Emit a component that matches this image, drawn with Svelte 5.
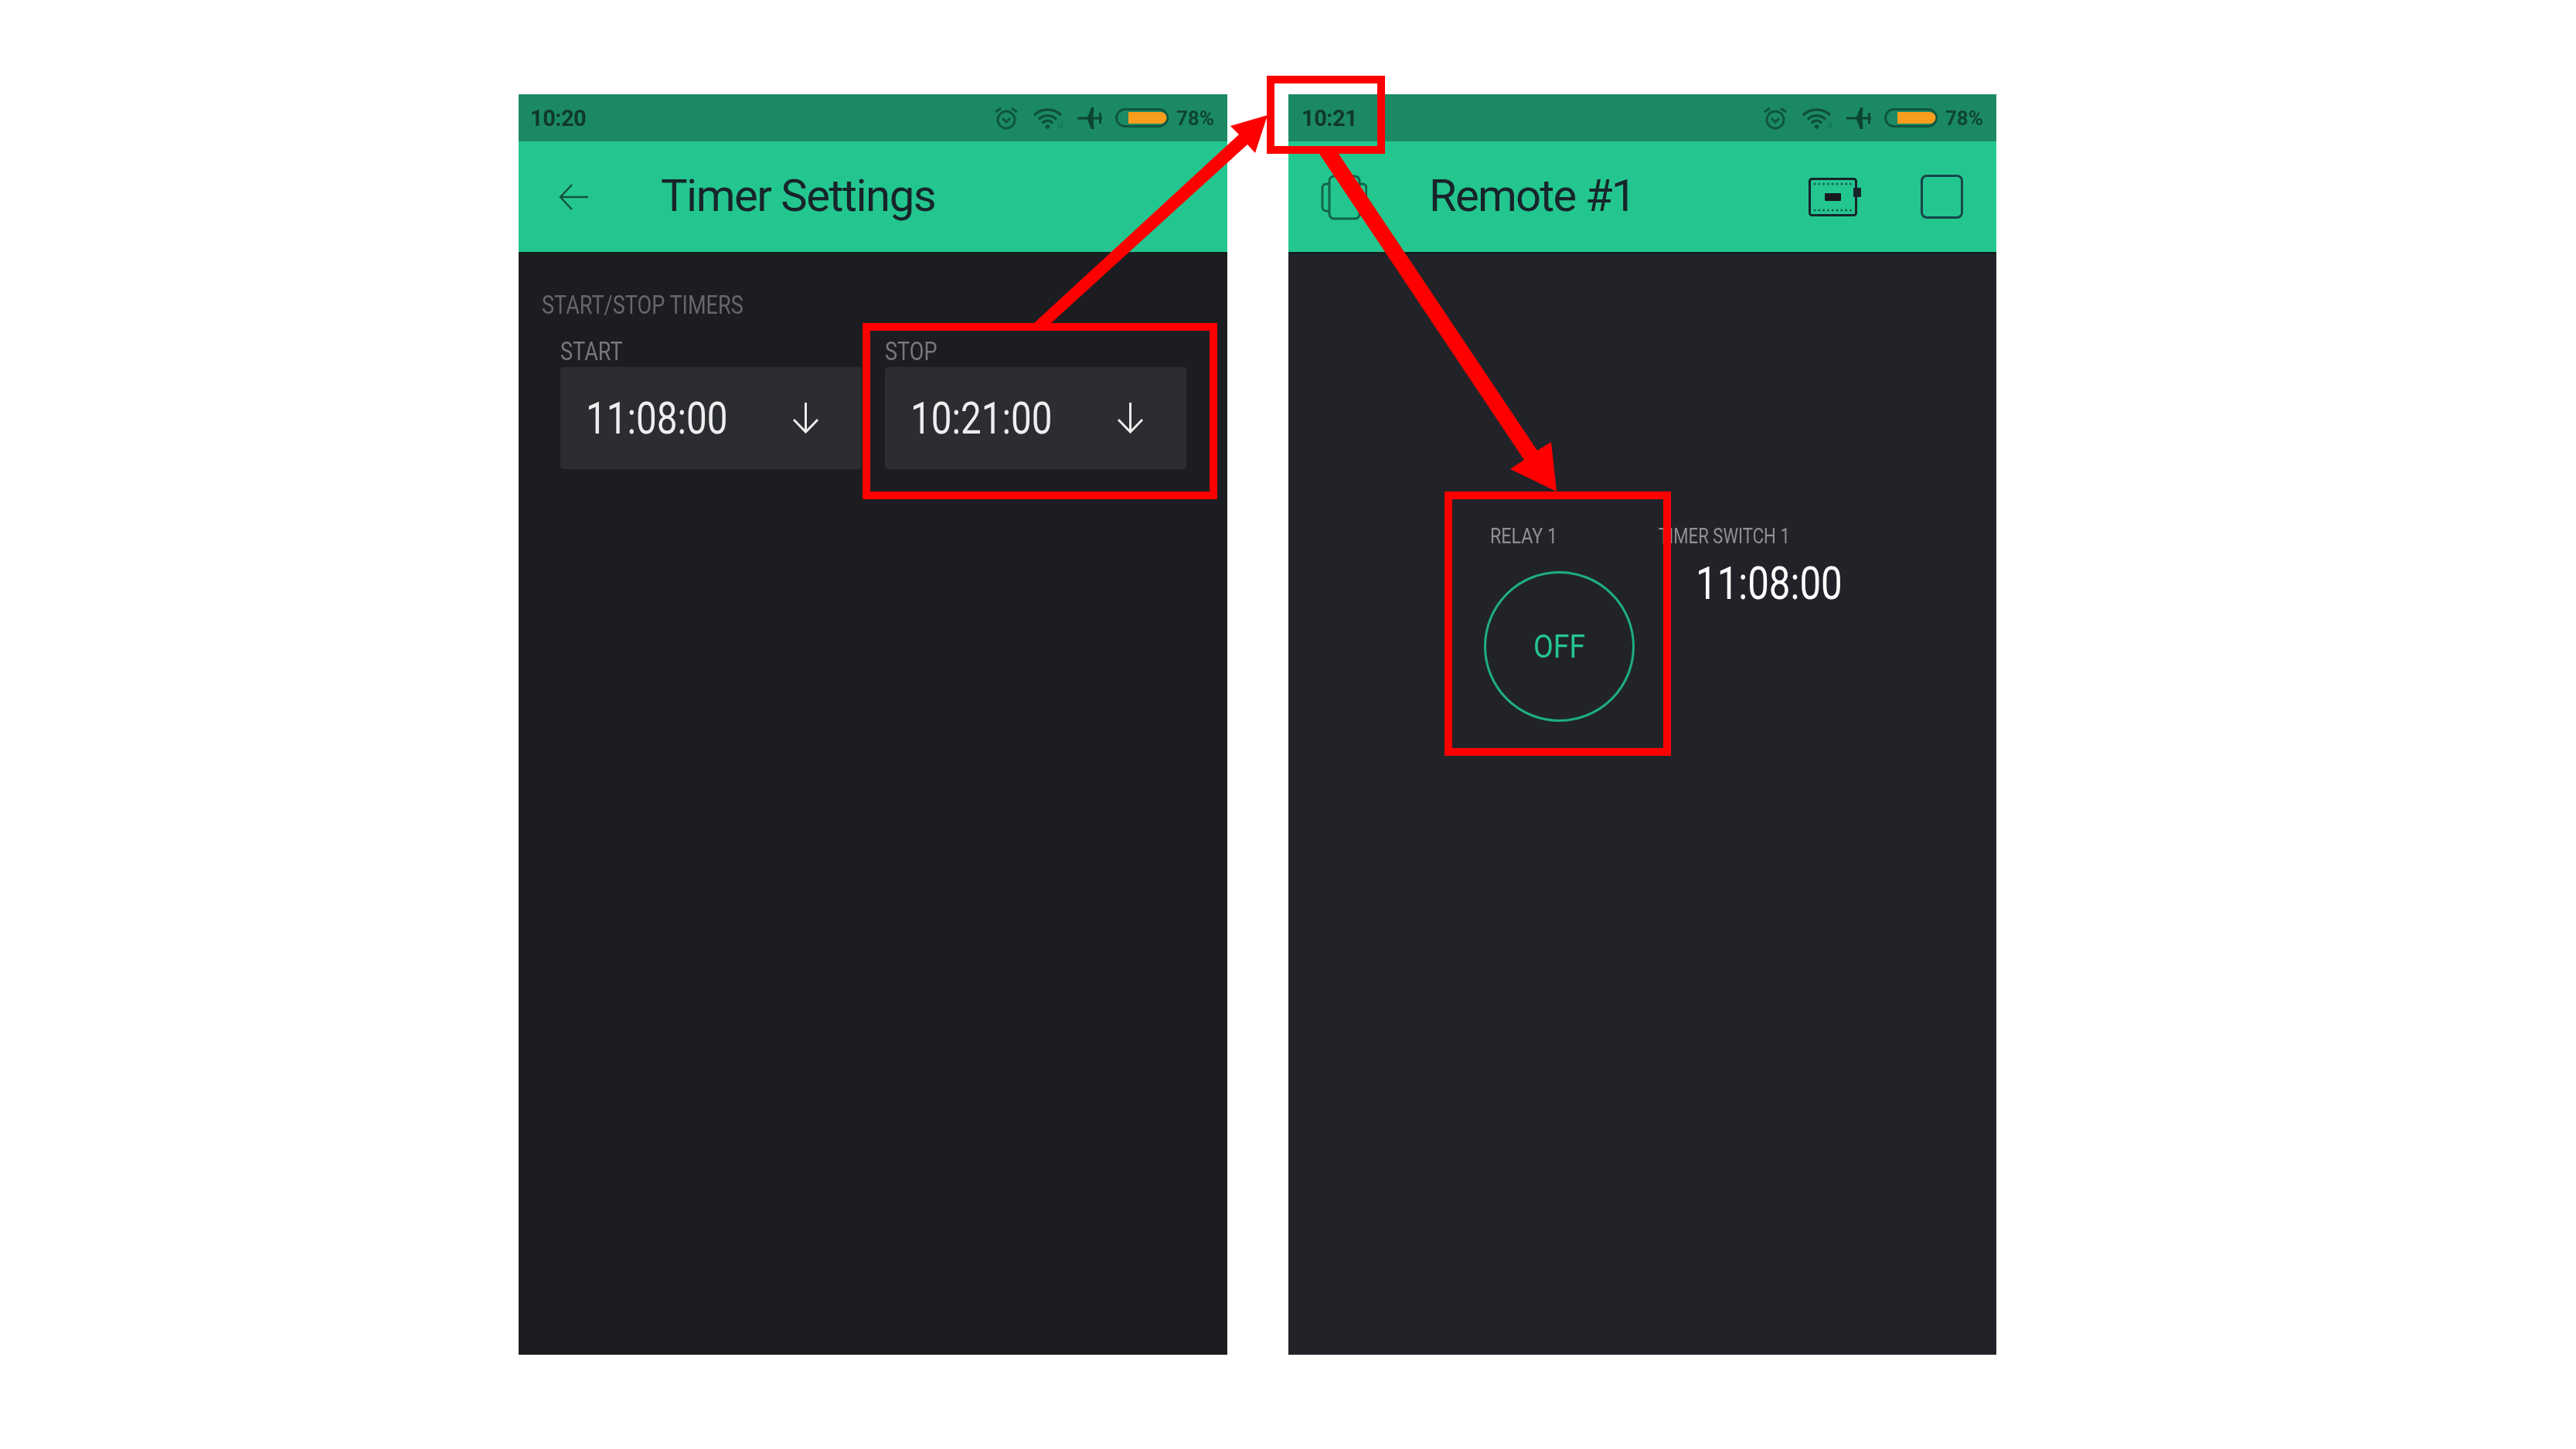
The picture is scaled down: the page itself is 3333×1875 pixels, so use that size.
<script lang="ts">
	const dots = [0, 1, 2, 3, 4, 5, 6, 7, 8];
</script>

{#snippet statusbar(time)}
	<div class="status">
		<span class="clock">{time}</span>
		<div class="status-icons">
			<svg class="alarm" width="32" height="30" viewBox="0 0 32 30" fill="none" stroke="#0f5540" stroke-width="3">
				<circle cx="16" cy="17" r="11" />
				<path d="M11 15l5 5 5-5M2 7l7-5M30 7l-7-5" />
			</svg>
			<svg width="40" height="28" viewBox="0 0 40 28" fill="none" stroke="#0f4f3b" stroke-width="3.400">
				<path d="M1 10a25 25 0 0 1 35 0M7 15.500a16 16 0 0 1 23 0M12 20.500a8 8 0 0 1 13 0" />
				<circle cx="18.500" cy="25" r="2.800" fill="#0f4f3b" stroke="none" />
				<path d="M33 21v6M37 19v8" stroke-width="1.500" opacity="0.4" />
			</svg>
			<svg width="32" height="28" viewBox="0 0 32 28" fill="#0d4434">
				<path d="M0 12.500h32v3H0zM13 12.500L18 0h3.500l-1 12.500zM13 15.500L18 28h3.500l-1-12.500zM28 7h3v14h-3z" />
			</svg>
			<svg width="69" height="25" viewBox="0 0 69 25" fill="none">
				<rect x="1.500" y="1.500" width="66" height="22" rx="11" stroke="#0f5540" stroke-width="3" />
				<path d="M17 5h42a7.500 7.500 0 0 1 0 15H17z" fill="#f99d1c" />
			</svg>
			<span class="pct">78%</span>
		</div>
	</div>
{/snippet}

<main class="page">
	<section class="phone settings">
		{@render statusbar('10:20')}
		<header class="appbar">
			<svg class="back" width="38" height="34" viewBox="0 0 38 34" fill="none" stroke="#14523f" stroke-width="2.400">
				<path d="M38 17H2M17 1L2 17l15 16" />
			</svg>
			<h1>Timer Settings</h1>
		</header>
		<div class="content">
			<p class="section-label">START/STOP TIMERS</p>
			<div class="fields">
				{#each [['START', '11:08:00'], ['STOP', '10:21:00']] as [label, value]}
					<div>
						<p class="field-label">{label}</p>
						<div class="field">
							<span class="value">{value}</span>
							<svg width="35" height="40" viewBox="0 0 35 40" fill="none" stroke="#eee" stroke-width="3">
								<path d="M17.500 0v38M2 22l15.500 16L33 22" />
							</svg>
						</div>
					</div>
				{/each}
			</div>
		</div>
	</section>

	<section class="phone dashboard">
		{@render statusbar('10:21')}
		<header class="appbar">
			<svg class="project" width="60" height="60" viewBox="0 0 60 60" fill="none" stroke="#14634b" stroke-width="3">
				<rect x="11" y="3" width="39" height="55" rx="6" />
				<path d="M10 13H7a5 5 0 0 0-5 5v25a5 5 0 0 0 5 5h3M50 13h4a5 5 0 0 1 5 5v25a5 5 0 0 1-5 5h-4" />
			</svg>
			<h1>Remote #1</h1>
			<svg class="board" width="68" height="50" viewBox="0 0 68 50" fill="none">
				<rect x="1.500" y="1.500" width="60" height="47" rx="3" stroke="#17252a" stroke-width="3" />
				{#each dots as d}
					<circle cx={8 + d * 5.800} cy="8" r="1.500" fill="#14634b" />
					<circle cx={8 + d * 5.800} cy="42" r="1.500" fill="#14634b" />
				{/each}
				<rect x="21" y="20" width="21" height="10" rx="1" fill="#17191f" />
				<rect x="58" y="13" width="10" height="12" rx="1" fill="#17252a" />
			</svg>
			<div class="square"></div>
		</header>
		<div class="widgets">
			<div class="relay">
				<p class="widget-label">RELAY 1</p>
				<div class="button"><span>OFF</span></div>
			</div>
			<div class="timer">
				<p class="widget-label">TIMER SWITCH 1</p>
				<p class="timer-value">11:08:00</p>
			</div>
		</div>
	</section>

	<!-- annotations drawn on top of the screenshots -->
	<svg class="marks" width="3333" height="1875" viewBox="0 0 3333 1875">
		<g fill="none" stroke="#ff0000" stroke-width="10">
			<rect x="1121" y="423" width="449" height="218" />
			<rect x="1644" y="103" width="143" height="91" />
			<rect x="1874" y="641" width="283" height="332" />
		</g>
		<g fill="#ff0000">
			<polygon points="1338,418 1360,418 1614,187 1624,198 1640,149 1592,163 1603,174" />
			<polygon points="1707,199 1732,199 1989,583 2007,572 2014,636 1954,607 1972,595" />
		</g>
	</svg>
</main>

<style>
	:global(body) {
		margin: 0;
		background: #fff;
	}

	.page {
		position: relative;
		display: flex;
		gap: 79px;
		height: 1875px;
		box-sizing: border-box;
		padding: 122px 0 0 671px;
		font-family: Roboto, sans-serif;
	}

	p,
	h1 {
		margin: 0;
		font-weight: 400;
	}

	.phone {
		display: flex;
		flex-direction: column;
		width: 917px;
		height: 1631px;
		filter: blur(0.7px);
	}

	.settings {
		background: #1c1d21;
	}

	.dashboard {
		width: 916px;
		background: #212328;
	}

	.status {
		display: flex;
		align-items: center;
		justify-content: space-between;
		height: 61px;
		padding: 0 17px 0 15px;
		box-sizing: border-box;
		background: #1b8a63;
	}

	.dashboard .status {
		padding-left: 17px;
	}

	.clock {
		font-size: 29px;
		font-weight: 700;
		letter-spacing: -0.5px;
		color: #10382c;
	}

	.status-icons {
		display: flex;
		align-items: center;
		gap: 17px;
	}

	.alarm {
		margin-right: 2px;
	}

	.pct {
		margin-left: -7px;
		font-size: 26px;
		font-weight: 700;
		color: #0f4534;
	}

	.appbar {
		display: flex;
		align-items: center;
		height: 146px;
		box-sizing: border-box;
		padding: 0 43px 0 52px;
		background: #24c68f;
		border-bottom: 3px solid #14201f;
	}

	.appbar h1 {
		margin: 0 0 4px 94px;
		font-size: 58px;
		letter-spacing: -1.500px;
		color: #17252a;
	}

	.dashboard .appbar {
		padding-left: 42px;
	}

	.dashboard .appbar h1 {
		margin-left: 80px;
		flex: 1;
		letter-spacing: -1.800px;
	}

	.square {
		width: 55px;
		height: 57px;
		margin-left: 77px;
		box-sizing: border-box;
		border: 3px solid #17454a;
		border-radius: 8px;
	}

	.content {
		padding: 50px 0 0 30px;
	}

	/* the app font is a condensed DIN, so Roboto gets squeezed horizontally */
	.section-label,
	.field-label,
	.value,
	.widget-label,
	.timer-value {
		transform: scaleX(0.82);
		transform-origin: left center;
	}

	.section-label {
		font-size: 33px;
		line-height: 31px;
		color: #66676a;
	}

	.fields {
		display: flex;
		gap: 30px;
		margin: 31px 0 0 24px;
	}

	.field-label {
		margin-bottom: 6px;
		font-size: 33px;
		line-height: 28px;
		color: #77787b;
	}

	.field {
		display: flex;
		align-items: center;
		justify-content: space-between;
		width: 390px;
		height: 132px;
		box-sizing: border-box;
		padding: 0 55px 0 33px;
		border-radius: 4px;
		background: #2b2d31;
		font-size: 58px;
		color: #eee;
	}

	.widgets {
		display: flex;
		gap: 31px;
		padding: 350px 0 0 253px;
	}

	.relay {
		width: 195px;
	}

	.widget-label {
		font-size: 27px;
		line-height: 30px;
		white-space: nowrap;
		color: #909194;
	}

	.relay .widget-label {
		margin-left: 8px;
		transform: scaleX(0.86);
	}

	.button {
		display: flex;
		align-items: center;
		justify-content: center;
		width: 195px;
		height: 195px;
		margin-top: 30px;
		box-sizing: border-box;
		border: 3.500px solid #1fae80;
		border-radius: 50%;
		padding-bottom: 2px;
		font-size: 43px;
		color: #24c68f;
	}

	.button span {
		transform: scaleX(0.87);
	}

	.timer-value {
		margin: 16px 0 0 48px;
		font-size: 60px;
		line-height: 60px;
		white-space: nowrap;
		color: #fff;
	}

	.marks {
		position: absolute;
		top: 0;
		left: 0;
	}
</style>
